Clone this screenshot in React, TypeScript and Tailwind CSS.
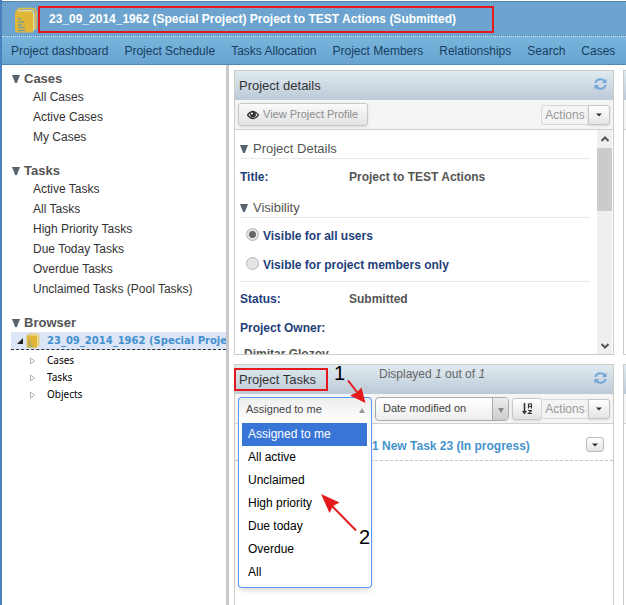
import { useState, type ReactNode } from 'react';

const navLinks = [
  'Project dashboard',
  'Project Schedule',
  'Tasks Allocation',
  'Project Members',
  'Relationships',
  'Search',
  'Cases',
];

const menus = [
  { title: 'Cases', items: ['All Cases', 'Active Cases', 'My Cases'] },
  {
    title: 'Tasks',
    items: [
      'Active Tasks',
      'All Tasks',
      'High Priority Tasks',
      'Due Today Tasks',
      'Overdue Tasks',
      'Unclaimed Tasks (Pool Tasks)',
    ],
  },
];

const filters = ['Assigned to me', 'All active', 'Unclaimed', 'High priority', 'Due today', 'Overdue', 'All'];

function BookIcon({ className }: { className: string }) {
  return (
    <svg viewBox="0 0 22 26" className={className} aria-hidden="true">
      <path d="M1 5 L4 1.500 H17 Q21 1.500 21 5.500 V22.500" fill="none" stroke="#e6bd3c" strokeWidth="1.600" />
      <path d="M1 4.500 L4 3 H16 Q19.500 3 19.500 7 V23 L18 24 V5Z" fill="#f3dc8c" />
      <path d="M0 4.500 H15 Q18 4.500 18 8 V25.500 H3 Q0 25.500 0 22.500Z" fill="#dfb637" />
      <path d="M3 12h3M3 15h6M3 18h4M3 20.500h7M3 23.500h7" stroke="#7f9f96" strokeWidth="1.300" />
    </svg>
  );
}

function Triangle() {
  return (
    <svg viewBox="0 0 8 8" className="h-2 w-2 shrink-0" aria-hidden="true">
      <path d="M0 0H8L4.800 8H3.200Z" fill="#56636f" />
    </svg>
  );
}

function Caret() {
  return (
    <svg viewBox="0 0 6 4" className="h-[4px] w-[6px]" aria-hidden="true">
      <path d="M0 0.500H6L3 3.500Z" fill="#333" />
    </svg>
  );
}

function Refresh() {
  return (
    <button type="button" aria-label="Refresh" className="mr-[6px] mb-[3px] ml-auto">
      <svg viewBox="0 0 13 12" className="h-3 w-[13px]" aria-hidden="true">
        <path d="M1.200 5 Q2.500 1.200 6.500 1.200 Q9 1.200 10.500 3 M11.800 7 Q10.500 10.800 6.500 10.800 Q4 10.800 2.500 9" fill="none" stroke="#70a5d8" strokeWidth="2" />
        <path d="M12.500 0.500V5H8ZM0.500 11.500V7H5Z" fill="#70a5d8" />
      </svg>
    </button>
  );
}

function PanelHeader({ children }: { children: ReactNode }) {
  return (
    <header className="flex h-[29px] shrink-0 items-center bg-gradient-to-b from-[#e0eaf0] to-[#bccad7] text-[13px] text-[#333]">
      {children}
    </header>
  );
}

function Actions() {
  return (
    <div className="mr-[3px] flex h-5 text-xs text-[#999]">
      <button type="button" className="w-12 rounded-l-[3px] border border-[#d8d8d8] bg-[#f4f4f4]">
        Actions
      </button>
      <button
        type="button"
        aria-label="More actions"
        className="-ml-px flex w-[22px] items-center justify-center rounded-r-[3px] border border-[#c4c4c4] bg-gradient-to-b from-white to-[#e4e4e4] shadow-sm"
      >
        <Caret />
      </button>
    </div>
  );
}

function Section({ title }: { title: string }) {
  return (
    <h3 className="mr-[7px] flex h-5 items-center gap-[5px] border-b border-[#e8e8e8] text-[13px] font-normal text-[#555]">
      <Triangle />
      {title}
    </h3>
  );
}

export default function App() {
  const [filter, setFilter] = useState(filters[0]);

  return (
    <div className="relative flex h-screen flex-col overflow-hidden border-l-2 border-[#4a80bd] bg-white font-['Liberation_Sans',Arial,sans-serif]">
      <div className="mt-px flex h-9 shrink-0 items-center border-y border-dotted border-t-[#3f7180] border-b-[#d5e5f2] bg-[#6ca4cf] pt-px pl-[13px]">
        <BookIcon className="h-[26px] w-[22px]" />
        <h1 className="ml-px w-[456px] whitespace-nowrap border-2 border-[#e5191b] pl-[9px] text-xs leading-[23px] font-bold text-white">
          23_09_2014_1962 (Special Project) Project to TEST Actions (Submitted)
        </h1>
      </div>
      <nav className="flex h-7 shrink-0 items-center gap-4 border-b border-[#5087b6] bg-gradient-to-b from-[#78b5dc] to-[#69a3d0] pl-[9px] text-xs whitespace-nowrap text-[#173f63]">
        {navLinks.map((label) => (
          <a key={label} href="#">
            {label}
          </a>
        ))}
      </nav>

      <div className="flex min-h-0 flex-1">
        <aside className="w-[227px] shrink-0 overflow-hidden border-r-[3px] border-[#c8c8c8] pt-[5px] pl-[9px]">
          {menus.map((menu) => (
            <section key={menu.title} className="mb-[15px]">
              <h2 className="flex h-[17px] items-center gap-1 pl-px text-[13px] font-bold text-[#555]">
                <Triangle />
                {menu.title}
              </h2>
              <ul className="pl-[22px] text-xs leading-5 text-[#333]">
                {menu.items.map((item) => (
                  <li key={item}>
                    <a href="#">{item}</a>
                  </li>
                ))}
              </ul>
            </section>
          ))}
          <section>
            <h2 className="flex h-[17px] items-center gap-1 pl-px text-[13px] font-bold text-[#555]">
              <Triangle />
              Browser
            </h2>
            <a
              href="#"
              className="mt-px flex h-[18px] items-center border-b border-dashed border-[#333] bg-[#dce6f6] font-['DejaVu_Sans',sans-serif] text-[10px] font-bold whitespace-nowrap text-[#438fd0]"
            >
              <svg viewBox="0 0 6 6" className="mr-[3px] ml-[6px] h-[6px] w-[6px] shrink-0" aria-hidden="true">
                <path d="M6 0V6H0Z" fill="#222" />
              </svg>
              <BookIcon className="mr-[7px] h-[15px] w-[14px] shrink-0" />
              23_09_2014_1962 (Special Project)
            </a>
            <ul className="pt-[2px] font-['Noto_Sans',sans-serif] text-[10px] leading-[17px] text-black">
              {['Cases', 'Tasks', 'Objects'].map((item) => (
                <li key={item} className="flex items-center gap-3 pl-[19px]">
                  <svg viewBox="0 0 5 8" className="h-2 w-[5px]" aria-hidden="true">
                    <path d="M0.500 1V7L4.500 4Z" fill="none" stroke="#b0b0b0" />
                  </svg>
                  <a href="#">{item}</a>
                </li>
              ))}
            </ul>
          </section>
        </aside>

        <main className="flex min-w-0 flex-1 flex-col gap-[9px] pt-[5px] pr-[9px] pl-[5px]">
          <section className="flex h-[285px] shrink-0 flex-col border border-[#cfccc4]">
            <PanelHeader>
              <h2 className="pl-1">Project details</h2>
              <Refresh />
            </PanelHeader>
            <div className="flex h-[30px] shrink-0 items-center justify-between border-b border-[#d0d0d0] bg-[#f5f5f5] pl-[3px]">
              <button
                type="button"
                className="flex h-[23px] w-[130px] items-center gap-1 rounded-[3px] border border-[#c8c8c8] bg-gradient-to-b from-[#fafafa] to-[#e3e3e3] pl-2 text-[11px] whitespace-nowrap text-[#8c8c8c] shadow-sm"
              >
                <svg viewBox="0 0 12 10" className="h-[10px] w-3 shrink-0" aria-hidden="true">
                  <path d="M0.500 5Q6 -2 11.500 5Q6 12 0.500 5Z" fill="white" stroke="#333" strokeWidth="1.300" />
                  <circle cx="6" cy="4.500" r="3" fill="#333" />
                  <circle cx="5" cy="3.500" r="1" fill="white" />
                </svg>
                View Project Profile
              </button>
              <Actions />
            </div>
            <div className="flex min-h-0 flex-1">
              <div className="min-w-0 flex-1 overflow-hidden pt-[9px] pl-[5px] text-xs font-bold text-[#555]">
                <Section title="Project Details" />
                <dl className="flex h-[39px] items-center pb-[3px]">
                  <dt className="w-[109px] text-[#1f3f7a]">Title:</dt>
                  <dd>Project to TEST Actions</dd>
                </dl>
                <Section title="Visibility" />
                <fieldset className="mr-[7px] flex flex-col gap-[9px] border-b border-[#e8e8e8] pt-2 pb-[6px] pl-[6px] text-[#1f3f7a]">
                  {['Visible for all users', 'Visible for project members only'].map((label, i) => (
                    <label key={label} className="flex h-5 items-center gap-1">
                      <input
                        type="radio"
                        name="visibility"
                        defaultChecked={i === 0}
                        className="mb-[3px] h-[13px] w-[13px] appearance-none rounded-full border border-[#b5b5b5] bg-[#e4e4e4] checked:bg-[radial-gradient(circle,#666_0_3px,#e4e4e4_4px)]"
                      />
                      {label}
                    </label>
                  ))}
                </fieldset>
                <dl>
                  <div className="flex h-[34px] items-center">
                    <dt className="w-[109px] text-[#1f3f7a]">Status:</dt>
                    <dd>Submitted</dd>
                  </div>
                  <dt className="leading-6 text-[#1f3f7a]">Project Owner:</dt>
                  <dd className="pt-[6px] pl-1 leading-4">Dimitar Glozov</dd>
                </dl>
              </div>
              <div className="flex w-4 shrink-0 flex-col items-center border-r border-white bg-[#efefef]" aria-hidden="true">
                <svg viewBox="0 0 8 6" className="my-[6px] h-[6px] w-2">
                  <path d="M0.500 5L4 1.500L7.500 5" fill="none" stroke="#555" strokeWidth="2" />
                </svg>
                <div className="h-[63px] w-full bg-[#cbcbcb]" />
                <svg viewBox="0 0 8 6" className="mt-auto mb-[5px] h-[6px] w-2">
                  <path d="M0.500 1L4 4.500L7.500 1" fill="none" stroke="#555" strokeWidth="2" />
                </svg>
              </div>
            </div>
          </section>

          <section className="flex min-h-0 flex-1 flex-col border border-b-0 border-[#cfccc4]">
            <PanelHeader>
              <h2 className="-ml-px w-[94px] border-2 border-[#e5191b] pl-[3px] leading-[19px]">Project Tasks</h2>
              <p className="mb-3 ml-[51px] text-xs text-[#666]">
                Displayed <i>1</i> out of <i>1</i>
              </p>
              <Refresh />
            </PanelHeader>
            <div className="flex h-[30px] shrink-0 items-center border-b border-[#d0d0d0] bg-[#f5f5f5] pl-[3px] text-[11px] text-[#444]">
              <div className="relative w-[134px] shrink-0">
                <select
                  aria-label="Task filter"
                  value={filter}
                  onChange={(e) => setFilter(e.target.value)}
                  className="h-6 w-full appearance-none rounded-t-[4px] border border-b-0 border-[#5897fb] bg-gradient-to-b from-[#ededed] to-white pl-[7px]"
                >
                  {filters.map((f) => (
                    <option key={f}>{f}</option>
                  ))}
                </select>
                <svg viewBox="0 0 6 5" className="absolute top-[11px] right-[7px] h-[5px] w-[6px]" aria-hidden="true">
                  <path d="M3 0L6 5H0Z" fill="#999" />
                </svg>
                <ul
                  role="listbox"
                  aria-label="Task filter options"
                  className="absolute top-6 left-0 z-10 w-full rounded-b-[4px] border border-t-0 border-[#5897fb] bg-white pt-[2px] pr-1 pb-[3px] pl-[3px] text-xs leading-[23px] text-black shadow-md"
                >
                  {filters.map((f) => (
                    <li
                      key={f}
                      role="option"
                      aria-selected={f === filter}
                      onClick={() => setFilter(f)}
                      className="pl-[6px] aria-selected:bg-[#3875d7] aria-selected:text-white"
                    >
                      {f}
                    </li>
                  ))}
                </ul>
              </div>
              <div className="relative ml-[3px] w-[134px] shrink-0">
                <select
                  aria-label="Sort field"
                  className="h-6 w-full appearance-none rounded-[4px] border border-[#aaa] bg-gradient-to-t from-[#eee] to-white pl-[7px]"
                >
                  <option>Date modified on</option>
                </select>
                <div className="pointer-events-none absolute inset-y-px right-px flex w-4 items-center justify-center rounded-r-[3px] border-l border-[#aaa] bg-gradient-to-t from-[#ccc] to-[#eee]">
                  <svg viewBox="0 0 6 5" className="mt-[3px] h-[5px] w-[6px]" aria-hidden="true">
                    <path d="M3 5L6 0H0Z" fill="#888" />
                  </svg>
                </div>
              </div>
              <button
                type="button"
                aria-label="Sort order"
                className="ml-[3px] flex h-[22px] w-[30px] items-center justify-center rounded-[3px] border border-[#c8c8c8] bg-gradient-to-b from-white to-[#e3e3e3] shadow-sm"
              >
                <svg viewBox="0 0 10 12" className="h-3 w-[10px]" fill="none" stroke="#333" aria-hidden="true">
                  <path d="M2.500 0V9" strokeWidth="1.600" />
                  <path d="M0 8H5L2.500 11.500Z" fill="#333" stroke="none" />
                  <path d="M6.500 5.500V1H9.500V5.500M6.500 3.500H9.500M6 7.500H9.500L6.500 10.500H10" strokeWidth="1.200" />
                </svg>
              </button>
              <div className="-ml-px">
                <Actions />
              </div>
            </div>
            <div className="flex h-[37px] shrink-0 items-center border-b border-dashed border-[#c4c4c4] pt-[7px] pr-[9px] pl-[137px] text-xs font-bold text-[#4593cc]">
              <a href="#">1 New Task 23 (In progress)</a>
              <button
                type="button"
                aria-label="Task actions"
                className="mb-[2px] ml-auto flex h-[15px] w-[18px] items-center justify-center rounded-[3px] border border-[#bbb] bg-gradient-to-b from-white to-[#e3e3e3]"
              >
                <Caret />
              </button>
            </div>
          </section>
        </main>

        <div className="flex w-[3px] shrink-0 flex-col gap-[9px] overflow-hidden pt-[5px]" aria-hidden="true">
          <div className="h-[285px] w-5 shrink-0 border border-[#cfccc4]">
            <PanelHeader>{null}</PanelHeader>
            <div className="h-[30px] border-b border-[#d0d0d0] bg-[#f5f5f5]" />
          </div>
          <div className="w-5 flex-1 border border-b-0 border-[#cfccc4]">
            <PanelHeader>{null}</PanelHeader>
            <div className="h-[30px] border-b border-[#d0d0d0] bg-[#f5f5f5]" />
          </div>
        </div>
      </div>

      <div className="pointer-events-none absolute inset-0 z-20 text-xl leading-5 text-black">
        <span className="absolute top-[363px] left-[332px]">1</span>
        <svg viewBox="0 0 20 24" className="absolute top-[380px] left-[345px] h-6 w-5" aria-hidden="true">
          <path d="M1 0.500L10 12" stroke="#e5191b" strokeWidth="2" />
          <path d="M18.500 23L3 15.500L9.500 12.500L14.500 7.500Z" fill="#e5191b" />
        </svg>
        <span className="absolute top-[527px] left-[357px]">2</span>
        <svg viewBox="0 0 37 38" className="absolute top-[493px] left-[318px] h-[38px] w-[37px]" aria-hidden="true">
          <path d="M36 37.500L12 13" stroke="#e5191b" strokeWidth="2" />
          <path d="M1 1L19.500 9.500L13 13L9.500 20Z" fill="#e5191b" />
        </svg>
      </div>
    </div>
  );
}
